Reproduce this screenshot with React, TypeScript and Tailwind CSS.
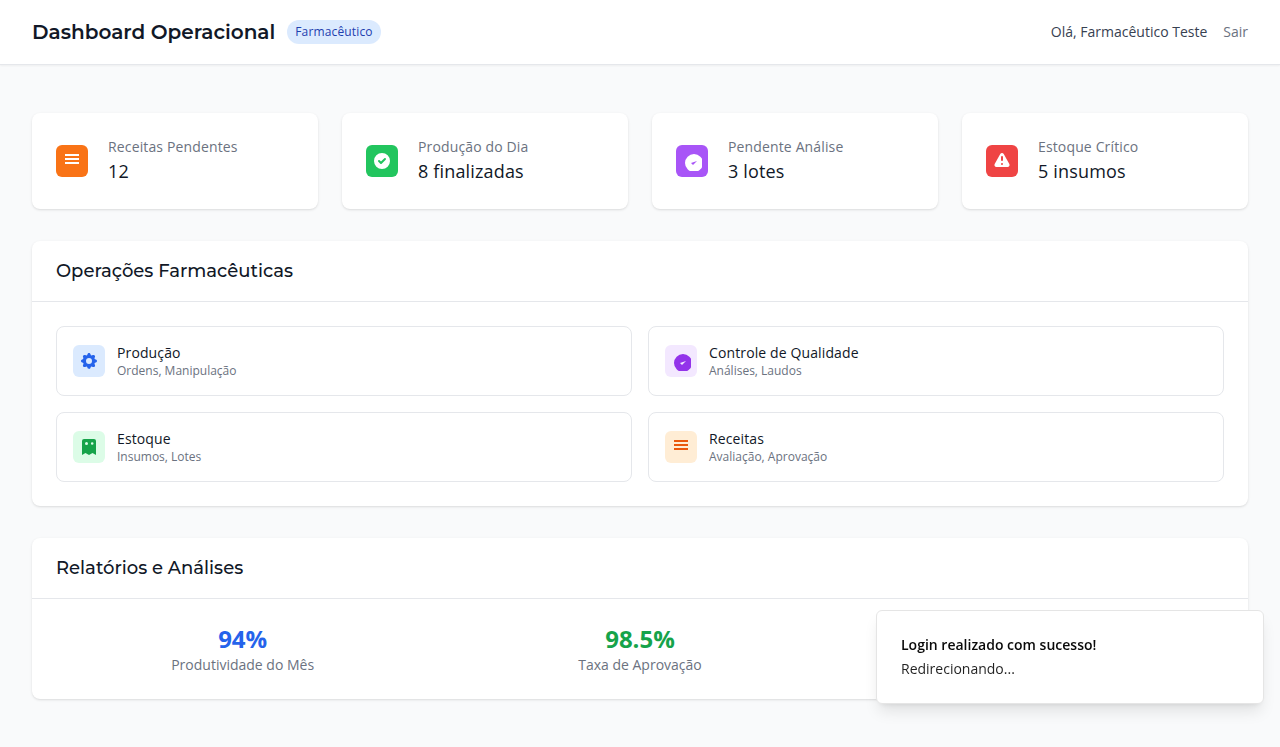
const cog =
  'M11.49 3.17c-.38-1.56-2.6-1.56-2.98 0a1.532 1.532 0 01-2.286.948c-1.372-.836-2.942.734-2.106 2.106.54.886.061 2.042-.947 2.287-1.561.379-1.561 2.6 0 2.978a1.532 1.532 0 01.947 2.287c-.836 1.372.734 2.942 2.106 2.106a1.532 1.532 0 012.287.947c.379 1.561 2.6 1.561 2.978 0a1.533 1.533 0 012.287-.947c1.372.836 2.942-.734 2.106-2.106a1.533 1.533 0 01.947-2.287c1.561-.379 1.561-2.6 0-2.978a1.532 1.532 0 01-.947-2.287c.836-1.372-.734-2.942-2.106-2.106a1.532 1.532 0 01-2.287-.947zM10 13a3 3 0 100-6 3 3 0 000 6z';
const bars = 'M3 3h14v2H3V3zm0 4h14v2H3V7zm0 4h14v2H3v-2z';
const check =
  'M10 18a8 8 0 100-16 8 8 0 000 16zm3.707-9.293a1 1 0 00-1.414-1.414L9 10.586 7.707 9.293a1 1 0 00-1.414 1.414l2 2a1 1 0 001.414 0l4-4z';
const quality = 'M9 12l2 2 4-4m6 2a9 9 0 11-18 0 9 9 0 0118 0z';
const warning =
  'M8.257 3.099c.765-1.36 2.722-1.36 3.486 0l5.58 9.92c.75 1.334-.213 2.98-1.742 2.98H4.42c-1.53 0-2.493-1.646-1.743-2.98l5.58-9.92zM11 13a1 1 0 11-2 0 1 1 0 012 0zm-1-8a1 1 0 00-1 1v3a1 1 0 002 0V6a1 1 0 00-1-1z';
const receipt =
  'M5 2a2 2 0 00-2 2v14l3.5-2 3.5 2 3.5-2 3.5 2V4a2 2 0 00-2-2H5zm2.5 3a1.5 1.5 0 100 3 1.5 1.5 0 000-3zm5.7.2a1.3 1.3 0 100 2.6 1.3 1.3 0 000-2.6z';

function Icon({ path }: { path: string }) {
  return (
    <svg className="h-5 w-5 overflow-hidden" fill="currentColor" viewBox="0 0 20 20">
      <path fillRule="evenodd" clipRule="evenodd" d={path} />
    </svg>
  );
}

const heading = "font-['Montserrat','Inter',sans-serif]";

const stats = [
  { label: 'Receitas Pendentes', value: '12', color: 'bg-[#f97316]', path: bars },
  { label: 'Produção do Dia', value: '8 finalizadas', color: 'bg-[#22c55e]', path: check },
  { label: 'Pendente Análise', value: '3 lotes', color: 'bg-[#a855f7]', path: quality },
  { label: 'Estoque Crítico', value: '5 insumos', color: 'bg-[#ef4444]', path: warning },
];

const operations = [
  { title: 'Produção', text: 'Ordens, Manipulação', color: 'bg-[#dbeafe] text-[#2563eb]', path: cog },
  { title: 'Controle de Qualidade', text: 'Análises, Laudos', color: 'bg-[#f3e8ff] text-[#9333ea]', path: quality },
  { title: 'Estoque', text: 'Insumos, Lotes', color: 'bg-[#dcfce7] text-[#16a34a]', path: receipt },
  { title: 'Receitas', text: 'Avaliação, Aprovação', color: 'bg-[#ffedd5] text-[#ea580c]', path: bars },
];

const reports = [
  { value: '94%', label: 'Produtividade do Mês', color: 'text-[#2563eb]' },
  { value: '98.5%', label: 'Taxa de Aprovação', color: 'text-[#16a34a]' },
];

export default function App() {
  return (
    <div className="h-[747px] overflow-hidden bg-[#f9fafb] font-['Open_Sans',sans-serif] text-[#111827]">
      <header className="flex h-[65px] items-center justify-between border-b border-[#e5e7eb] bg-white px-8 shadow-[0_1px_2px_0_rgba(0,0,0,0.05)]">
        <div className="flex items-center">
          <h1 className={`${heading} text-xl font-semibold`}>Dashboard Operacional</h1>
          <span className="ml-3 rounded-full bg-[#dbeafe] px-2 py-1 text-xs font-medium tracking-[0.15px] text-[#1e40af]">Farmacêutico</span>
        </div>
        <div className="flex items-center gap-4 text-sm">
          <span className="text-[#374151]">Olá, Farmacêutico Teste</span>
          <button className="text-[#6b7280]">Sair</button>
        </div>
      </header>

      <main className="px-8 pt-12">
        <div className="mb-8 grid grid-cols-4 gap-6">
          {stats.map((s) => (
            <div key={s.label} className="flex h-24 items-center rounded-lg bg-white px-6 shadow-sm">
              <div className={`flex h-8 w-8 items-center justify-center rounded-md text-white ${s.color}`}>
                <Icon path={s.path} />
              </div>
              <dl className="ml-5">
                <dt className="text-sm font-medium tracking-[0.14px] text-[#6b7280]">{s.label}</dt>
                <dd className="text-lg font-medium tracking-[0.16px]">{s.value}</dd>
              </dl>
            </div>
          ))}
        </div>

        <section className="mb-8 rounded-lg bg-white shadow-sm">
          <div className="border-b border-[#e5e7eb] px-6 py-4">
            <h2 className={`${heading} text-lg font-medium`}>Operações Farmacêuticas</h2>
          </div>
          <div className="grid grid-cols-2 gap-4 p-6">
            {operations.map((o) => (
              <button key={o.title} className="flex h-[70px] items-center rounded-lg border border-[#e5e7eb] px-4 text-left">
                <span className={`flex h-8 w-8 items-center justify-center rounded-md ${o.color}`}>
                  <Icon path={o.path} />
                </span>
                <span className="ml-3 flex flex-col">
                  <span className="text-sm font-medium tracking-[0.12px]">{o.title}</span>
                  <span className="text-xs text-[#6b7280]">{o.text}</span>
                </span>
              </button>
            ))}
          </div>
        </section>

        <section className="rounded-lg bg-white shadow-sm">
          <div className="border-b border-[#e5e7eb] px-6 py-4">
            <h2 className={`${heading} text-lg font-medium`}>Relatórios e Análises</h2>
          </div>
          <div className="grid h-[100px] grid-cols-3 gap-6 p-6">
            {reports.map((r) => (
              <div key={r.label} className="text-center">
                <div className={`text-2xl font-bold ${r.color}`}>{r.value}</div>
                <div className="text-sm text-[#6b7280]">{r.label}</div>
              </div>
            ))}
          </div>
        </section>
      </main>

      <div className="fixed right-4 bottom-[43px] flex h-[94px] w-[388px] flex-col justify-center gap-1 rounded-md border border-[#e5e5e5] bg-white px-6 text-sm text-[#0a0a0a] shadow-lg">
        <div className="font-semibold">Login realizado com sucesso!</div>
        <div className="opacity-90">Redirecionando...</div>
      </div>
    </div>
  );
}
